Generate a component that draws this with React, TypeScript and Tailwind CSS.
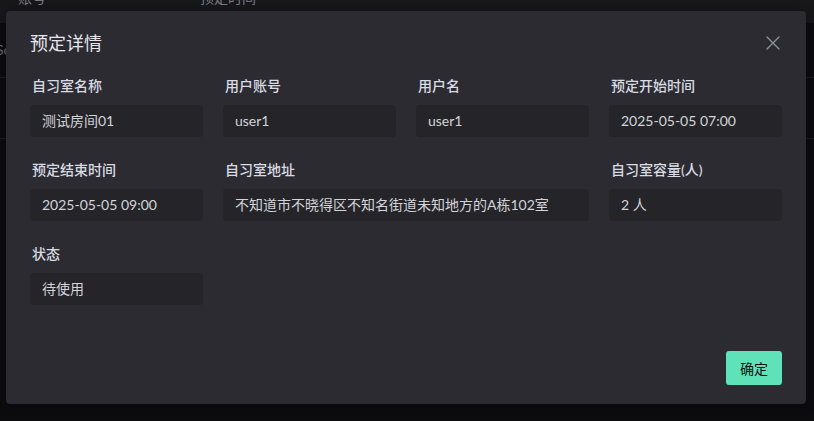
import { X } from "lucide-react";

const FONT = "font-['Lato','Noto_Sans_CJK_SC',sans-serif]";

interface Field {
  label: string;
  value: string;
  wide?: boolean;
}

const FIELDS: Field[] = [
  { label: "自习室名称", value: "测试房间01" },
  { label: "用户账号", value: "user1" },
  { label: "用户名", value: "user1" },
  { label: "预定开始时间", value: "2025-05-05 07:00" },
  { label: "预定结束时间", value: "2025-05-05 09:00" },
  { label: "自习室地址", value: "不知道市不晓得区不知名街道未知地方的A栋102室", wide: true },
  { label: "自习室容量(人)", value: "2 人" },
  { label: "状态", value: "待使用" },
];

// Table behind the dialog overlay
function BackgroundTable() {
  return (
    <div className="flex flex-col">
      <div className="flex h-[23px] items-end bg-[#18181b] text-[14px] leading-[20px] text-[#7d7d84]">
        <span className="-ml-[6px] mb-[15px]">户</span>
        <span className="mb-[15px] ml-[10px] w-[182px]">账号</span>
        <span className="mb-[15px]">预定时间</span>
      </div>
      <div className="flex h-[55px] items-center border-b border-[#1d1d21] text-[14px] text-[#6c6c73]">
        <span className="-ml-[4px] -mt-[1px]">Sc</span>
      </div>
      <div className="h-[61px] border-b border-[#1d1d21]" />
    </div>
  );
}

function FormItem({ field }: { field: Field }) {
  return (
    <div className={field.wide ? "col-span-2" : ""}>
      <div className="pl-[2px] text-[14px] leading-[22px] font-medium text-[#d9dce3]">
        {field.label}
      </div>
      <div className="mt-2 flex h-8 items-center rounded-[4px] bg-[#252429] px-3 pb-[2px] text-[14px] text-[#d3d5da]">
        {field.value}
      </div>
    </div>
  );
}

export default function App() {
  return (
    <div className={`relative h-[421px] w-[814px] overflow-hidden bg-[#0c0c0f] ${FONT}`}>
      <BackgroundTable />

      <div className="absolute left-[6px] top-[11px] flex h-[393px] w-[800px] flex-col rounded-[4px] bg-[#2c2b32] shadow-[0_0_12px_rgba(0,0,0,0.4)]">
        <div className="flex items-center justify-between pl-6 pr-[21px] pt-5">
          <h2 className="text-[18px] leading-[24px] text-[#e5e7ec]">预定详情</h2>
          <X className="h-6 w-6 text-[#8e9096]" strokeWidth={1.4} />
        </div>

        <div className="mt-5 grid grid-cols-4 gap-x-5 gap-y-[22px] px-6">
          {FIELDS.map((f) => (
            <FormItem key={f.label} field={f} />
          ))}
        </div>

        <div className="mt-auto flex justify-end px-6 pb-[19px]">
          <button className="h-[34px] w-14 rounded-[3px] bg-[#5fe2b8] text-[14px] text-[#111] font-['Noto_Sans_CJK_SC',sans-serif]">
            确定
          </button>
        </div>
      </div>
    </div>
  );
}
